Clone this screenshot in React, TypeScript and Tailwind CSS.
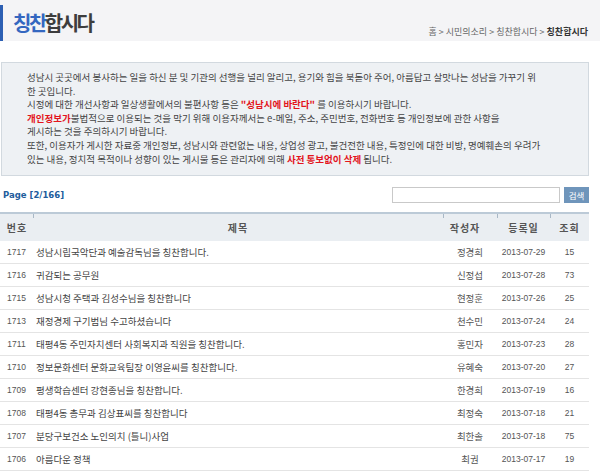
const rows = [
  { no: "1717", title: "성남시립국악단과 예술감독님을 칭찬합니다.", author: "정경희", date: "2013-07-29", views: "15" },
  { no: "1716", title: "귀감되는 공무원", author: "신정섭", date: "2013-07-28", views: "73" },
  { no: "1715", title: "성남시청 주택과 김성수님을 칭찬합니다", author: "현정훈", date: "2013-07-26", views: "25" },
  { no: "1713", title: "재정경제 구기범님 수고하셨습니다", author: "천수민", date: "2013-07-24", views: "24" },
  { no: "1711", title: "태평4동 주민자치센터 사회복지과 직원을 칭찬합니다.", author: "홍민자", date: "2013-07-23", views: "28" },
  { no: "1710", title: "정보문화센터 문화교육팀장 이영윤씨를 칭찬합니다.", author: "유혜숙", date: "2013-07-20", views: "27" },
  { no: "1709", title: "평생학습센터 강현종님을 칭찬합니다.", author: "한경희", date: "2013-07-19", views: "16" },
  { no: "1708", title: "태평4동 총무과 김상표씨를 칭찬합니다", author: "최정숙", date: "2013-07-18", views: "21" },
  { no: "1707", title: "분당구보건소 노인의치 (틀니)사업", author: "최한솔", date: "2013-07-18", views: "75" },
  { no: "1706", title: "아름다운 정책", author: "최권", date: "2013-07-17", views: "19" },
];

const font = "font-['Liberation_Sans','Noto_Sans_CJK_KR',sans-serif]";

function Tick() {
  return <span className="absolute left-0 top-0 h-[4px] w-px bg-[#a9b8c6]" />;
}

export default function App() {
  return (
    <div className={`w-[600px] h-[471px] overflow-hidden bg-white ${font} text-[#444]`}>
      {/* header */}
      <div className="h-[41px] bg-[#f4f4f6] flex items-end">
        <div className="h-[36px] w-[3px] bg-[#2c5fb3]" />
        <h1 className="ml-[10px] mb-[8px] text-[20px] leading-none font-bold tracking-[-2.5px] font-['Noto_Sans_CJK_KR',sans-serif]">
          <span className="text-[#3467c0]">칭찬</span>
          <span className="text-[#3d3d3d]">합시다</span>
        </h1>
        <div className="ml-auto mr-[12px] mb-[5px] text-[9px] leading-none text-[#666] font-['Noto_Sans_CJK_KR',sans-serif]">
          홈 &gt; 시민의소리 &gt; 칭찬합시다 &gt; <span className="font-bold text-[#333]">칭찬합시다</span>
        </div>
      </div>

      {/* notice box */}
      <div className="mt-[21px] ml-[1px] w-[588px] h-[114px] border border-[#d2d9df] bg-[#eef1f4] pl-[25px] pt-[8px] text-[9.5px] leading-[13.6px] text-[#444] whitespace-nowrap font-['Noto_Sans_CJK_KR',sans-serif]">
        성남시 곳곳에서 봉사하는 일을 하신 분 및 기관의 선행을 널리 알리고, 용기와 힘을 북돋아 주어, 아름답고 살맛나는 성남을 가꾸기 위
        <br />한 곳입니다.
        <br />시정에 대한 개선사항과 일상생활에서의 불편사항 등은{" "}
        <span className="font-bold text-[#e3141c]">"성남시에 바란다"</span> 를 이용하시기 바랍니다.
        <br />
        <span className="font-bold text-[#e3141c]">개인정보가</span>불법적으로 이용되는 것을 막기 위해 이용자께서는 e-메일, 주소, 주민번호, 전화번호 등 개인정보에 관한 사항을
        <br />게시하는 것을 주의하시기 바랍니다.
        <br />또한, 이용자가 게시한 자료중 개인정보, 성남시와 관련없는 내용, 상업성 광고, 불건전한 내용, 특정인에 대한 비방, 명예훼손의 우려가
        <br />있는 내용, 정치적 목적이나 성향이 있는 게시물 등은 관리자에 의해{" "}
        <span className="font-bold text-[#e3141c]">사전 통보없이 삭제</span> 됩니다.
      </div>

      {/* page + search */}
      <div className="mt-[11px] h-[16px] flex items-center w-[589px]">
        <span className="ml-[3px] text-[8.5px] font-bold text-[#215c9c] font-['DejaVu_Sans',sans-serif]">
          Page [2/166]
        </span>
        <input className="ml-auto shrink-0 w-[168px] min-w-[168px] h-[16px] border border-[#c9c9c9] bg-white outline-none" />
        <button className="ml-[4px] shrink-0 w-[25px] h-[16px] bg-[#6f95bb] text-white text-[8.5px] leading-none font-['Noto_Sans_CJK_KR',sans-serif]">
          검색
        </button>
      </div>

      {/* table */}
      <div className="mt-[9px] w-[589px]">
        <div className="grid grid-cols-[33px_410px_54px_53px_39px] h-[29px] border-t-2 border-[#bccad7] bg-[#eaeef2] items-center text-[10px] font-bold text-[#555] tracking-[1px] font-['Noto_Sans_CJK_KR',sans-serif]">
          <div className="text-center pl-[1px]">번호</div>
          <div className="relative h-full flex items-center justify-center"><Tick />제목</div>
          <div className="relative h-full flex items-center justify-center pr-[10px]"><Tick />작성자</div>
          <div className="relative h-full flex items-center justify-center"><Tick />등록일</div>
          <div className="relative h-full flex items-center justify-center"><Tick />조회</div>
        </div>
        {rows.map((r) => (
          <div
            key={r.no}
            className="grid grid-cols-[33px_410px_54px_53px_39px] h-[23px] border-b border-[#e4e4e4] items-center text-[9.5px] text-[#444]"
          >
            <div className="text-center text-[8.5px] text-[#555]">{r.no}</div>
            <div className="pl-[3px] truncate font-['Noto_Sans_CJK_KR',sans-serif]">{r.title}</div>
            <div className="text-center font-['Noto_Sans_CJK_KR',sans-serif] text-[#555]">{r.author}</div>
            <div className="text-center text-[8.5px] text-[#555]">{r.date}</div>
            <div className="text-center text-[8.5px] text-[#555]">{r.views}</div>
          </div>
        ))}
      </div>
    </div>
  );
}
